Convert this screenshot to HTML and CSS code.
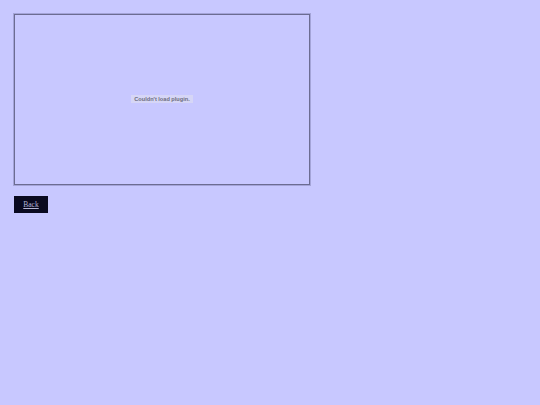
FILE: index.html
```html
<!DOCTYPE html>
<html>
<head>
<meta charset="utf-8">
<link rel="stylesheet" href="styles.css">
</head>
<body>
<div class="page">
  <div class="plugin">
    <span class="msg">Couldn't load plugin.</span>
  </div>
  <div class="actions">
    <a class="back" href="#">Back</a>
  </div>
</div>
</body>
</html>
```

FILE: styles.css
```css
html, body {
  margin: 0;
  padding: 0;
  background: #c8c8ff;
}
.page {
  padding: 14px 0 0 14px;
  display: flex;
  flex-direction: column;
  align-items: flex-start;
}
.plugin {
  box-sizing: border-box;
  width: 296px;
  height: 171px;
  border: 1px solid #6c6c92;
  box-shadow: 0 0 0 1px #a4a4d8;
  display: flex;
  align-items: center;
  justify-content: center;
}
.msg {
  font-family: "Liberation Sans", Arial, sans-serif;
  font-size: 5.6px;
  font-weight: bold;
  color: #6c6c80;
  background: #d6d6f6;
  padding: 1px 3px;
  margin-top: -2px;
}
.actions {
  display: flex;
  margin-top: 11px;
}
.back {
  display: block;
  background: #0a0a20;
  color: #b4b4d4;
  font-family: "Liberation Serif", "Times New Roman", serif;
  font-size: 7.5px;
  width: 34px;
  height: 17px;
  line-height: 17px;
  text-align: center;
  text-decoration: underline;
  box-sizing: border-box;
}
```
